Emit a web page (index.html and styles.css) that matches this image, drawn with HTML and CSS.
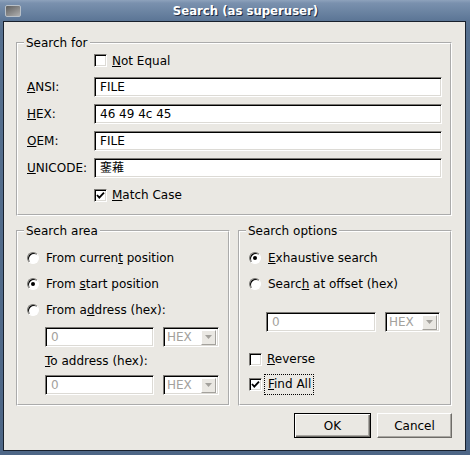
FILE: index.html
```html
<!DOCTYPE html>
<html>
<head>
<meta charset="utf-8">
<title>Search (as superuser)</title>
<link rel="stylesheet" href="styles.css">
</head>
<body>
<div class="window">
  <div class="titlebar">
    <div class="app-icon"></div>
    <div class="title">Search (as superuser)</div>
  </div>
  <div class="client">
    <fieldset class="group group-for">
      <legend>Search for</legend>
      <div class="row row-first">
        <span class="label"></span>
        <span class="check"></span>
        <span class="opt-text"><u>N</u>ot Equal</span>
      </div>
      <div class="row">
        <span class="label"><u>A</u>NSI:</span>
        <span class="input">FILE</span>
      </div>
      <div class="row">
        <span class="label"><u>H</u>EX:</span>
        <span class="input">46 49 4c 45</span>
      </div>
      <div class="row">
        <span class="label"><u>O</u>EM:</span>
        <span class="input">FILE</span>
      </div>
      <div class="row">
        <span class="label"><u>U</u>NICODE:</span>
        <span class="input cjk">䥆䕌</span>
      </div>
      <div class="row">
        <span class="label"></span>
        <span class="check checked"><svg width="11" height="11" viewBox="0 0 11 11"><path d="M2 5 L4.3 7.6 L9 2.6" fill="none" stroke="#000" stroke-width="1.8"/></svg></span>
        <span class="opt-text"><u>M</u>atch Case</span>
      </div>
    </fieldset>

    <div class="bottom-groups">
      <fieldset class="group group-area">
        <legend>Search area</legend>
        <div class="row">
          <span class="radio"></span>
          <span class="opt-text">From curren<u>t</u> position</span>
        </div>
        <div class="row gap6">
          <span class="radio checked"></span>
          <span class="opt-text">From <u>s</u>tart position</span>
        </div>
        <div class="row gap6">
          <span class="radio"></span>
          <span class="opt-text">From a<u>d</u>dress (hex):</span>
        </div>
        <div class="row indent-area gap7">
          <span class="input disabled w-area">0</span>
          <span class="combo"><span class="combo-text">HEX</span><span class="combo-btn"><svg width="7" height="4" viewBox="0 0 7 4"><path d="M0 0 H7 L3.5 4 Z" fill="#a3a19c"/></svg></span></span>
        </div>
        <div class="row indent-area gap4">
          <span class="opt-text"><u>T</u>o address (hex):</span>
        </div>
        <div class="row indent-area gap4">
          <span class="input disabled w-area">0</span>
          <span class="combo"><span class="combo-text">HEX</span><span class="combo-btn"><svg width="7" height="4" viewBox="0 0 7 4"><path d="M0 0 H7 L3.5 4 Z" fill="#a3a19c"/></svg></span></span>
        </div>
      </fieldset>

      <fieldset class="group group-opts">
        <legend>Search options</legend>
        <div class="row">
          <span class="radio checked"></span>
          <span class="opt-text"><u>E</u>xhaustive search</span>
        </div>
        <div class="row gap6">
          <span class="radio"></span>
          <span class="opt-text">Searc<u>h</u> at offset (hex)</span>
        </div>
        <div class="row indent-opts gap18">
          <span class="input disabled w-opts">0</span>
          <span class="combo combo-opts"><span class="combo-text">HEX</span><span class="combo-btn"><svg width="7" height="4" viewBox="0 0 7 4"><path d="M0 0 H7 L3.5 4 Z" fill="#a3a19c"/></svg></span></span>
        </div>
        <div class="row gap17">
          <span class="check"></span>
          <span class="opt-text"><u>R</u>everse</span>
        </div>
        <div class="row gap5">
          <span class="check checked"><svg width="11" height="11" viewBox="0 0 11 11"><path d="M2 5 L4.3 7.6 L9 2.6" fill="none" stroke="#000" stroke-width="1.8"/></svg></span>
          <span class="opt-text focus"><u>F</u>ind All</span>
        </div>
      </fieldset>
    </div>

    <div class="buttons">
      <button class="btn btn-default">OK</button>
      <button class="btn btn-cancel">Cancel</button>
    </div>
  </div>
</div>
</body>
</html>
```

FILE: styles.css
```css
* {
  box-sizing: border-box;
}

html, body {
  margin: 0;
  padding: 0;
  background: #56708f;
}

body {
  font-family: "DejaVu Sans", "Noto Sans CJK SC", sans-serif;
  font-size: 12px;
  color: #000;
}

.window {
  width: 470px;
  height: 455px;
  background: linear-gradient(to bottom, #6a82a1 0px, #56708f 30px, #4d6686 455px);
  display: flex;
  flex-direction: column;
}

.titlebar {
  height: 21px;
  display: flex;
  align-items: flex-start;
  background: linear-gradient(to bottom, #8ea2bc 0px, #7a91ae 3px, #5b7595 21px);
}

.app-icon {
  width: 16px;
  height: 12px;
  margin: 5px 0 0 5px;
  border: 1px solid #b8c0c8;
  border-radius: 2px;
  background: linear-gradient(150deg, #5e5e5e 0%, #8a8a8a 55%, #b0b0b0 100%);
  flex: none;
}

.title {
  flex: 1;
  text-align: center;
  color: #fff;
  font-family: "DejaVu Sans Condensed", "DejaVu Sans", sans-serif;
  font-stretch: condensed;
  font-weight: bold;
  font-size: 13px;
  line-height: 22px;
  text-shadow: 1px 1px 0 #1e2c42;
}

.client {
  margin: 0 4px 4px 3px;
  border: 1px solid #18202c;
  background: #eae8e3;
  flex: 1;
  padding: 14px 13px 0 12px;
  display: flex;
  flex-direction: column;
}

.group {
  margin: 0;
  border: 2px groove #ffffff;
  min-width: 0;
}

.group legend {
  padding: 0 2px;
  margin-left: -3px;
  line-height: 14px;
  font-size: 12px;
}

.group-for {
  padding: 1px 8px 9px 9px;
}

.row {
  display: flex;
  align-items: center;
  height: 20px;
}

.group-for .row + .row {
  margin-top: 7px;
}

.group-for .row-first {
  height: 19px;
}

.label {
  width: 67px;
  flex: none;
  white-space: nowrap;
}

.input {
  flex: 1;
  height: 20px;
  background: #fff;
  border: 1px solid;
  border-color: #7b7975 #ffffff #ffffff #7b7975;
  box-shadow: inset 1px 1px 0 #000, inset -1px -1px 0 #dcdad5;
  padding: 0 0 0 5px;
  line-height: 18px;
  white-space: nowrap;
  overflow: hidden;
}

.input.disabled {
  flex: none;
  color: #a3a19c;
}

.cjk {
  font-family: "DejaVu Sans", "Noto Sans CJK TC", "Noto Sans CJK SC", sans-serif;
}

.check {
  width: 13px;
  height: 13px;
  flex: none;
  background: #fff;
  border: 1px solid;
  border-color: #7b7975 #ffffff #ffffff #7b7975;
  box-shadow: inset 1px 1px 0 #000, inset -1px -1px 0 #dcdad5;
  display: flex;
  align-items: center;
  justify-content: center;
}

.check svg {
  display: block;
}

.opt-text {
  white-space: nowrap;
  line-height: 14px;
}

.check + .opt-text {
  margin-left: 5px;
}

.radio {
  width: 12px;
  height: 12px;
  flex: none;
  border-radius: 50%;
  background: #fff;
  border: 1px solid;
  border-color: #7b7975 #ffffff #ffffff #7b7975;
  box-shadow: inset 1px 1px 0 #000;
  display: flex;
  align-items: center;
  justify-content: center;
}

.radio.checked::after {
  content: "";
  width: 4px;
  height: 4px;
  border-radius: 50%;
  background: #000;
}

.radio + .opt-text {
  margin-left: 7px;
}

.bottom-groups {
  display: flex;
  gap: 8px;
  margin-top: 8px;
}

.bottom-groups .group {
  flex: 1 1 0;
  padding: 10px 7px 9px 9px;
}

.gap4 { margin-top: 4px; }
.gap5 { margin-top: 5px; }
.gap6 { margin-top: 6px; }
.gap7 { margin-top: 7px; }
.gap17 { margin-top: 17px; }
.gap18 { margin-top: 18px; }

.indent-area {
  padding-left: 18px;
}

.indent-opts {
  padding-left: 17px;
}

.w-area {
  width: 109px;
}

.w-opts {
  width: 110px;
}

.combo {
  width: 56px;
  height: 20px;
  margin-left: 9px;
  flex: none;
  background: #fff;
  border: 1px solid;
  border-color: #7b7975 #ffffff #ffffff #7b7975;
  box-shadow: inset 1px 1px 0 #000, inset -1px -1px 0 #dcdad5;
  display: flex;
  align-items: center;
  padding: 2px 2px 2px 3px;
}

.combo-opts {
  width: 55px;
}

.combo-text {
  flex: 1;
  color: #a3a19c;
  line-height: 14px;
}

.combo-btn {
  width: 15px;
  height: 15px;
  flex: none;
  background: #eae8e3;
  border: 1px solid;
  border-color: #ffffff #a3a19c #a3a19c #ffffff;
  display: flex;
  align-items: center;
  justify-content: center;
}

.combo-btn svg {
  display: block;
}

.focus {
  outline: 1px dotted #000;
  outline-offset: 0;
  padding: 2px 2px 2px 3px;
  margin-left: 3px !important;
  line-height: 15px;
}

.buttons {
  display: flex;
  justify-content: flex-end;
  gap: 6px;
  margin-top: 7px;
}

.btn {
  height: 25px;
  font-family: "DejaVu Sans", sans-serif;
  font-size: 12px;
  color: #000;
  background: #eae8e3;
  padding: 0;
  margin: 0;
}

.btn-default {
  width: 77px;
  border: 1px solid #000;
  box-shadow: inset 1px 1px 0 #ffffff, inset -1px -1px 0 #6e6c68, inset -2px -2px 0 #a9a7a2;
}

.btn-cancel {
  width: 75px;
  border: 1px solid;
  border-color: #ffffff #6e6c68 #6e6c68 #ffffff;
  box-shadow: inset -1px -1px 0 #a9a7a2;
}
```
